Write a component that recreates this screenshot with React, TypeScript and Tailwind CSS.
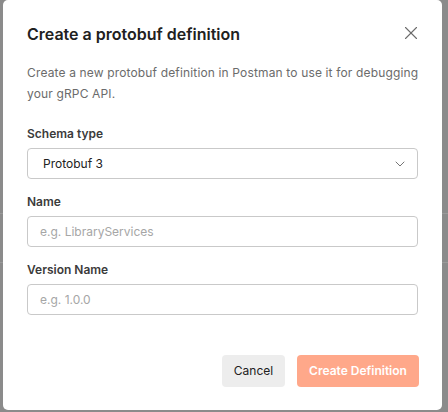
import { X, ChevronDown } from "lucide-react";

export default function App() {
  return (
    <div
      className="relative h-[412px] w-[448px] overflow-hidden bg-[#8b8b8b]"
      style={{ fontFamily: "Inter, 'Liberation Sans', sans-serif" }}
    >
      {/* underlying page lines */}
      <div className="absolute left-0 right-0 top-[213px] h-px bg-[#9a9a9a]" />
      <div className="absolute left-0 right-0 top-[262px] h-px bg-[#9a9a9a]" />

      {/* Modal */}
      <div className="relative ml-[3px] flex h-[410px] w-[439px] flex-col rounded-[5px] bg-white px-6">
        <div className="flex items-center justify-between pt-[24px]">
          <h1 className="text-[16px] font-semibold leading-[20px] text-[#212121]">
            Create a protobuf definition
          </h1>
          <X className="-mr-[4px] -mt-[3px] h-[22px] w-[22px] text-[#6b6b6b]" strokeWidth={1.2} />
        </div>

        <p className="mt-[18px] whitespace-nowrap text-[12px] leading-[21px] tracking-[0.15px] text-[#6b6b6b]">
          Create a new protobuf definition in Postman to use it for debugging
          <br />
          your gRPC API.
        </p>

        <div className="mt-[22px] flex flex-col">
          <label className="text-[12px] font-semibold leading-[16px] text-[#3b3b3b]">Schema type</label>
          <div className="mt-[6px] flex h-[31px] items-center justify-between rounded-[4px] border border-[#c9c9c9] pl-[15px] pr-[9px]">
            <span className="text-[12px] text-[#212121]">Protobuf 3</span>
            <ChevronDown className="h-[16px] w-[16px] text-[#6b6b6b]" strokeWidth={1.4} />
          </div>

          <label className="mt-[15px] text-[12px] font-semibold leading-[16px] text-[#3b3b3b]">Name</label>
          <div className="mt-[6px] flex h-[31px] items-center rounded-[4px] border border-[#c9c9c9] pl-[12px]">
            <span className="text-[12px] text-[#a6a6a6]">e.g. LibraryServices</span>
          </div>

          <label className="mt-[15px] text-[12px] font-semibold leading-[16px] text-[#3b3b3b]">Version Name</label>
          <div className="mt-[6px] flex h-[31px] items-center rounded-[4px] border border-[#c9c9c9] pl-[12px]">
            <span className="text-[12px] text-[#a6a6a6]">e.g. 1.0.0</span>
          </div>
        </div>

        <div className="mt-[40px] flex justify-end gap-[12px]">
          <button className="h-[32px] w-[63px] rounded-[4px] bg-[#ededed] text-[12px] text-[#212121]">
            Cancel
          </button>
          <button className="-mr-[1px] h-[32px] w-[122px] rounded-[4px] bg-[#ffa88a] text-[12px] font-semibold text-white">
            Create Definition
          </button>
        </div>
      </div>
    </div>
  );
}
